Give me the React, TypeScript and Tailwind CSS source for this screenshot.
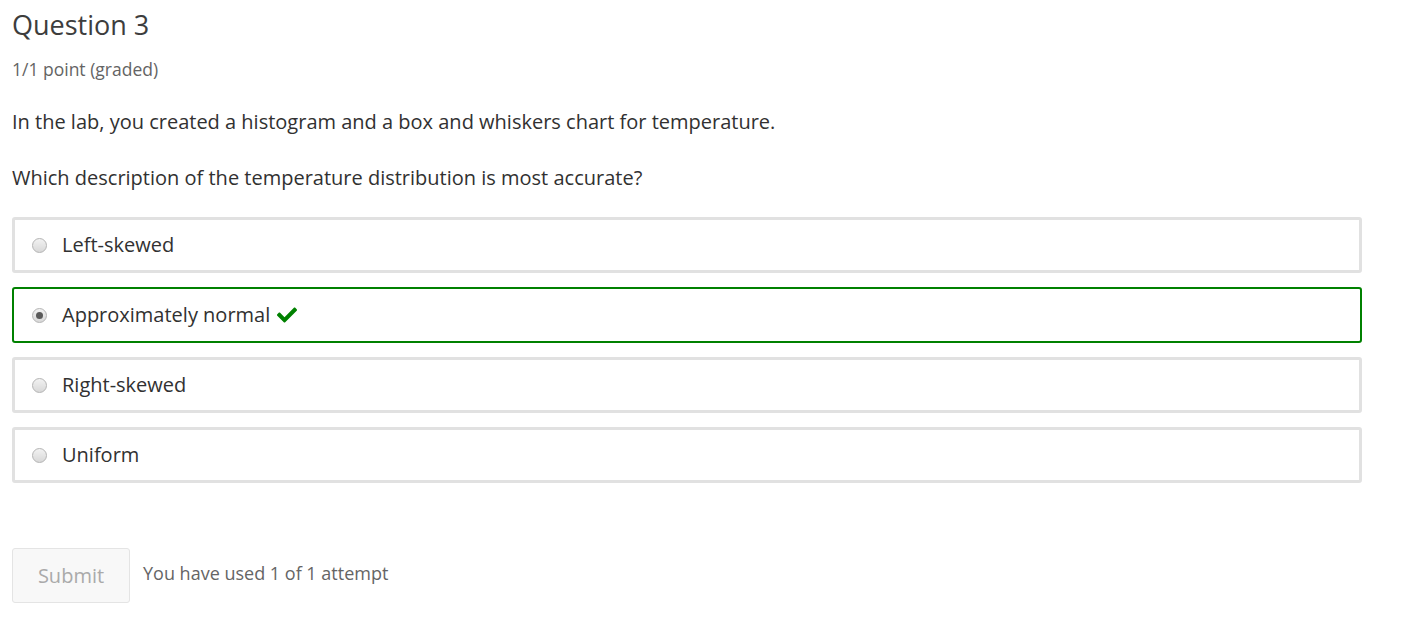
import { FaCheck } from 'react-icons/fa';

const options = [
  { label: 'Left-skewed', selected: false },
  { label: 'Approximately normal', selected: true },
  { label: 'Right-skewed', selected: false },
  { label: 'Uniform', selected: false },
];

function Radio({ checked }: { checked: boolean }) {
  return (
    <span className="flex h-[15px] w-[15px] items-center justify-center rounded-full border border-[#b4b4b4] bg-gradient-to-b from-[#f2f2f2] to-[#d8d8d8]">
      {checked && <span className="h-[7px] w-[7px] rounded-full bg-[#5a5a5a]" />}
    </span>
  );
}

export default function App() {
  return (
    <div className="min-h-screen bg-white px-3 pt-[7px] font-['Open_Sans',sans-serif] text-[#313131]">
      {/* Header */}
      <h3 className="text-[27px] leading-[36px] text-[#3d3d3d]">Question 3</h3>
      <div className="mt-[14px] text-[17.5px] leading-[24px] text-[#646464]">1/1 point (graded)</div>

      {/* Problem text */}
      <p className="mt-[27px] text-[20px] leading-[28px]">
        In the lab, you created a histogram and a box and whiskers chart for temperature.
      </p>
      <p className="mt-[28px] text-[20px] leading-[28px]">
        Which description of the temperature distribution is most accurate?
      </p>

      {/* Choices */}
      <div className="mt-[25px] flex w-[1350px] flex-col gap-[14px]">
        {options.map((opt) => (
          <label
            key={opt.label}
            className={`flex h-[56px] items-center rounded-[3px] ${
              opt.selected ? 'border-2 border-[#008100] pl-[18px]' : 'border-[3px] border-[#e1e1e1] pl-[17px]'
            }`}
          >
            <Radio checked={opt.selected} />
            <span className="ml-[15px] text-[20px] leading-[26px] text-[#313131]">{opt.label}</span>
            {opt.selected && <FaCheck className="ml-[7px] h-[20px] w-[20px] text-[#008100]" />}
          </label>
        ))}
      </div>

      {/* Actions */}
      <div className="mt-[65px] flex items-center gap-[13px]">
        <button className="h-[55px] w-[118px] rounded-[3px] border border-[#e4e4e4] bg-[#f8f8f8] text-[20px] text-[#aaaaaa]">
          Submit
        </button>
        <span className="-mt-[4px] text-[18px] text-[#656565]">You have used 1 of 1 attempt</span>
      </div>
    </div>
  );
}
